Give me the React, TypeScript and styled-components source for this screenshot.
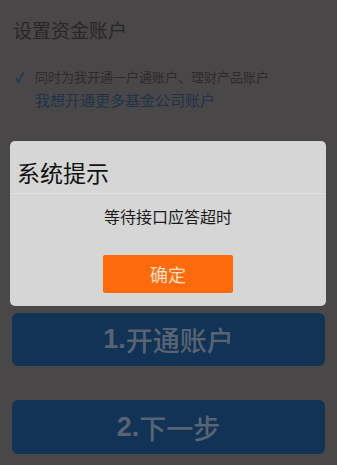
import React from "react";
import styled, { createGlobalStyle } from "styled-components";

const Global = createGlobalStyle`
  html, body { margin: 0; padding: 0; background: #4a4748; }
  body { font-family: "Noto Sans CJK SC", "Noto Sans", sans-serif; }
`;

const Page = styled.div`
  position: relative;
  width: 337px;
  height: 465px;
  overflow: hidden;
  background: #4a4748;
`;

const Content = styled.div`
  display: flex;
  flex-direction: column;
  padding: 0 12px;
`;

const Heading = styled.div`
  margin-top: 20px;
  padding-left: 1px;
  font-size: 19px;
  line-height: 20px;
  color: #282627;
`;

const CheckRow = styled.div`
  margin-top: 28px;
  display: flex;
  align-items: center;
  gap: 10px;
  padding-left: 3px;
  font-size: 13px;
  line-height: 18px;
  color: #2d2b2c;
`;

const Tick = styled.span`
  color: #1d3354;
  font-size: 13px;
  font-weight: 700;
  width: 10px;
`;

const Link = styled.div`
  margin-top: 5px;
  padding-left: 23px;
  font-size: 15px;
  line-height: 18px;
  color: #203349;
`;

const Actions = styled.div`
  margin-top: 204px;
  display: flex;
  flex-direction: column;
  gap: 34px;
`;

const BigButton = styled.div<{ $h: number }>`
  height: ${(p) => p.$h}px;
  border-radius: 6px;
  background: #103356;
  display: flex;
  align-items: center;
  justify-content: center;
  font-family: "Noto Sans CJK SC", sans-serif;
  font-weight: 500;
  font-size: 27px;
  color: #5a6372;
`;

const Num = styled.span`
  font-family: "Liberation Sans", sans-serif;
  font-weight: 700;
`;

const Overlay = styled.div`
  position: absolute;
  inset: 0;
  padding: 141px 11px 0 10px;
`;

const Dialog = styled.div`
  height: 165px;
  border-radius: 5px;
  background: #d6d6d6;
  display: flex;
  flex-direction: column;
  align-items: center;
`;

const DialogTitle = styled.div`
  align-self: stretch;
  padding: 18px 0 8px 7px;
  font-size: 23px;
  line-height: 26px;
  color: #111;
  border-bottom: 1px solid #e2e2e2;
`;

const Message = styled.div`
  margin-top: 11px;
  font-size: 16px;
  line-height: 22px;
  color: #1a1a1a;
`;

const Confirm = styled.div`
  margin-top: 28px;
  width: 130px;
  height: 38px;
  border-radius: 2px;
  background: #ff6a0c;
  display: flex;
  align-items: center;
  justify-content: center;
  font-size: 18px;
  color: #fbe1cb;
`;

export default function App() {
  return (
    <>
      <Global />
      <Page>
        <Content>
          <Heading>设置资金账户</Heading>
          <CheckRow>
            <Tick>✓</Tick>
            <span>同时为我开通一户通账户、理财产品账户</span>
          </CheckRow>
          <Link>我想开通更多基金公司账户</Link>
          <Actions>
            <BigButton $h={53}>
              <Num>1.</Num>开通账户
            </BigButton>
            <BigButton $h={54}>
              <Num>2.</Num>下一步
            </BigButton>
          </Actions>
        </Content>
        <Overlay>
          <Dialog>
            <DialogTitle>系统提示</DialogTitle>
            <Message>等待接口应答超时</Message>
            <Confirm>确定</Confirm>
          </Dialog>
        </Overlay>
      </Page>
    </>
  );
}
